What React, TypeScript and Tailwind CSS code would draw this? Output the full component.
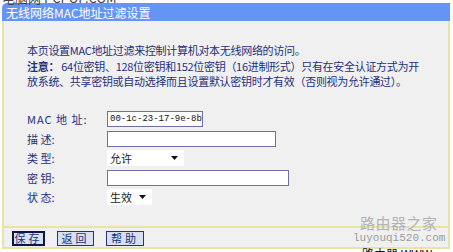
import React from 'react';

const labelCls = 'w-[80px] shrink-0 text-[11px] leading-[16px] text-[#1f2f7a]';
const boxCls = 'h-[16px] border border-[#6b70a8] bg-white';

const Caret: React.FC = () => (
  <svg width="7" height="4" viewBox="0 0 7 4" className="shrink-0">
    <polygon points="0,0 7,0 3.5,4" fill="#111" />
  </svg>
);

const FakeSelect: React.FC<{ value: string; width: string }> = ({ value, width }) => (
  <div className={`${width} h-[16px] flex items-center justify-between bg-white pl-[3px] pr-[6px] text-[11px] text-[#222]`}>
    <span>{value}</span>
    <Caret />
  </div>
);

const Btn: React.FC<{ label: string; focused?: boolean; width: string }> = ({ label, focused, width }) => (
  <button
    className={`${width} h-[15px] flex items-center justify-center bg-[#d6e0f1] text-[11px] leading-[13px] tracking-[3px] text-[#1f2f7a] ${
      focused ? 'border-2 border-[#10163f]' : 'border border-[#2a3470]'
    }`}
  >
    {label}
  </button>
);

export default function App() {
  return (
    <div className="relative w-[453px] h-[252px] overflow-hidden bg-white font-['Noto_Sans_CJK_SC','Noto_Sans',sans-serif]">
      <div className="ml-[2px] mt-[3px] w-[448px]">
        <div className="h-[18px] rounded-tl-[5px] bg-[#6495f5] pl-[4px] pt-[1px] text-[12px] leading-[18px] text-white">
          无线网络MAC地址过滤设置
        </div>
        <div className="border-x-2 border-[#e9e3a6] bg-[#f0f0f0]">
          <div className="pl-[23px] pt-[22px] pb-[21px] text-[11px] leading-[15px] text-[#1f2f7a]">
            <p className="tracking-[-0.3px]">本页设置MAC地址过滤来控制计算机对本无线网络的访问。</p>
            <p className="mt-[1px] tracking-[-0.3px]">
              <b>注意：</b> 64位密钥、128位密钥和152位密钥（16进制形式）只有在安全认证方式为开
            </p>
            <p className="tracking-[-0.3px]">放系统、共享密钥或自动选择而且设置默认密钥时才有效（否则视为允许通过）。</p>

            <div className="mt-[22px] flex flex-col gap-[3.5px]">
              <div className="flex items-center">
                <span className={`${labelCls} tracking-[1px]`}>MAC 地 址:</span>
                <div className={`${boxCls} w-[96px] border-[#3b4680] pl-[2px] font-['Liberation_Mono',monospace] text-[9px] leading-[14px] text-[#111]`}>
                  00-1c-23-17-9e-8b
                </div>
              </div>
              <div className="flex items-center">
                <span className={labelCls}>描 述:</span>
                <div className={`${boxCls} w-[169px]`} />
              </div>
              <div className="flex items-center">
                <span className={labelCls}>类 型:</span>
                <FakeSelect value="允许" width="w-[77px]" />
              </div>
              <div className="flex items-center">
                <span className={labelCls}>密 钥:</span>
                <div className={`${boxCls} w-[182px]`} />
              </div>
              <div className="flex items-center">
                <span className={labelCls}>状 态:</span>
                <FakeSelect value="生效" width="w-[45px]" />
              </div>
            </div>
          </div>
          <div className="h-[2px] bg-[#e9e3a6]" />
          <div className="flex h-[19px] gap-[12px] pl-[8px] pt-[3px]">
            <Btn label="保存" focused width="w-[33px]" />
            <Btn label="返回" width="w-[37px]" />
            <Btn label="帮助" width="w-[38px]" />
          </div>
          <div className="h-[2px] bg-[#e9e3a6]" />
        </div>
      </div>

      {/* watermarks laid over the page */}
      <div className="absolute left-[2px] top-[-9px] text-[13px] leading-[14px] text-[#444]">电脑网 PCPOP.COM</div>
      <div className="absolute left-[360px] top-[215px] text-[15px] leading-[16px] tracking-[0.5px] text-[#b3b3b3]">路由器之家</div>
      <div className="absolute left-[353px] top-[232px] font-['Liberation_Mono',monospace] text-[11px] leading-[12px] text-[#9c9c9c]">
        luyouqi520.com
      </div>
      <div className="absolute left-[362px] top-[248px] text-[12px] leading-[12px] text-[#111]">路由器 WWW</div>
    </div>
  );
}
